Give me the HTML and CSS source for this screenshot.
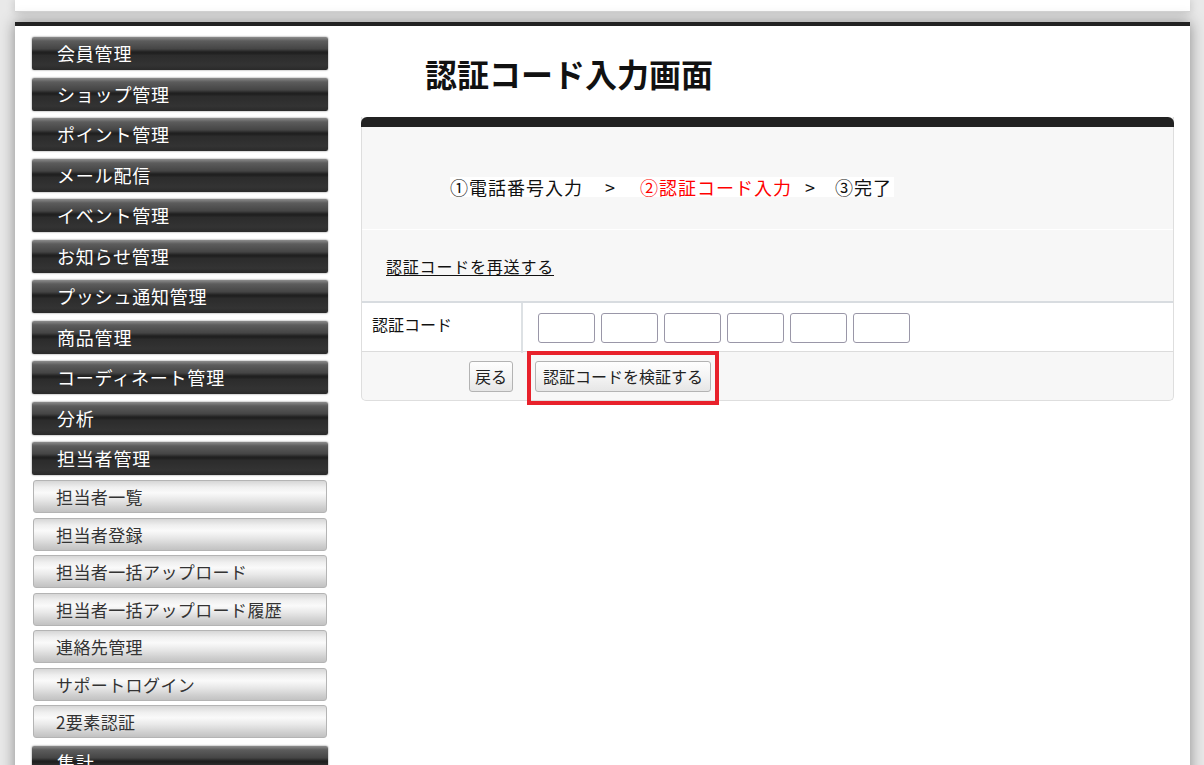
FILE: index.html
```html
<!DOCTYPE html>
<html lang="ja">
<head>
<meta charset="utf-8">
<title>認証コード入力画面</title>
<link rel="stylesheet" href="styles.css">
</head>
<body>
<div class="page">
  <div class="topbar"></div>
  <div class="frame">
    <nav class="sidebar">
      <ul class="menu">
        <li><a class="main" href="#">会員管理</a></li>
        <li><a class="main" href="#">ショップ管理</a></li>
        <li><a class="main" href="#">ポイント管理</a></li>
        <li><a class="main" href="#">メール配信</a></li>
        <li><a class="main" href="#">イベント管理</a></li>
        <li><a class="main" href="#">お知らせ管理</a></li>
        <li><a class="main" href="#">プッシュ通知管理</a></li>
        <li><a class="main" href="#">商品管理</a></li>
        <li><a class="main" href="#">コーディネート管理</a></li>
        <li><a class="main" href="#">分析</a></li>
        <li class="open"><a class="main" href="#">担当者管理</a>
          <ul class="sub">
            <li><a href="#">担当者一覧</a></li>
            <li><a href="#">担当者登録</a></li>
            <li><a href="#">担当者一括アップロード</a></li>
            <li><a href="#">担当者一括アップロード履歴</a></li>
            <li><a href="#">連絡先管理</a></li>
            <li><a href="#">サポートログイン</a></li>
            <li><a href="#">2要素認証</a></li>
          </ul>
        </li>
        <li><a class="main" href="#">集計</a></li>
      </ul>
    </nav>
    <main class="content">
      <h1 class="title">認証コード入力画面</h1>
      <section class="panel">
        <div class="panel-head"></div>
        <div class="steps"><span class="steps-inner"><span>①電話番号入力</span><span class="sep sep1">&gt;</span><span class="current">②認証コード入力</span><span class="sep sep2">&gt;</span><span>③完了</span></span></div>
        <div class="resend"><a href="#">認証コードを再送する</a></div>
        <div class="form-row">
          <div class="label">認証コード</div>
          <div class="value">
            <input class="code" type="text" maxlength="1">
            <input class="code" type="text" maxlength="1">
            <input class="code" type="text" maxlength="1">
            <input class="code" type="text" maxlength="1">
            <input class="code" type="text" maxlength="1">
            <input class="code" type="text" maxlength="1">
          </div>
        </div>
        <div class="actions">
          <div class="back-cell"><button class="btn btn-back" type="button">戻る</button></div>
          <div class="submit-cell"><button class="btn btn-submit" type="button">認証コードを検証する</button><span class="highlight"></span></div>
        </div>
      </section>
    </main>
  </div>
</div>
</body>
</html>
```

FILE: styles.css
```css
html, body {
  margin: 0;
  padding: 0;
}
body {
  background: #e9e9e9;
  font-family: "Noto Sans CJK JP", "Noto Sans", sans-serif;
  color: #111;
  overflow: hidden;
  height: 765px;
}
.page {
  width: 1175px;
  margin-left: 15px;
}
.topbar {
  height: 11px;
  background: #fff;
  border-bottom: 1px solid #d6d6d6;
  box-shadow: 0 0 10px rgba(0, 0, 0, 0.2);
  margin-bottom: 10px;
}
.frame {
  display: flex;
  background: #fff;
  border-top: 4px solid #222;
  box-shadow: 0 0 14px rgba(0, 0, 0, 0.42);
  min-height: 900px;
}
.sidebar {
  width: 296px;
  flex-shrink: 0;
  padding: 11px 0 0 17px;
}
.menu, .sub {
  list-style: none;
  margin: 0;
  padding: 0;
}
.menu > li {
  margin-bottom: 7.5px;
}
.main {
  display: block;
  height: 33px;
  line-height: 33px;
  padding-left: 25px;
  color: #fff;
  text-decoration: none;
  font-size: 18px;
  letter-spacing: 0.8px;
  border-radius: 2px;
  background: linear-gradient(to bottom, #8c8c8c 0%, #5c5c5c 12%, #454545 36%, #262626 44%, #1e1e1e 48%, #2c2c2c 56%, #333 85%, #2a2a2a 100%);
  box-shadow: 0 0 2px rgba(0, 0, 0, 0.55);
}
.open .main {
  margin-bottom: 5px;
}
.sub li {
  margin-bottom: 4.5px;
}
.sub li:last-child {
  margin-bottom: 0;
}
.sub a {
  display: block;
  height: 31px;
  line-height: 31px;
  margin: 0 1px 0 1px;
  padding-left: 22px;
  color: #333;
  text-decoration: none;
  font-size: 17px;
  letter-spacing: 0.4px;
  border: 1px solid #b4b4b4;
  border-radius: 3px;
  background: linear-gradient(to bottom, #d6d6d6 0%, #efefef 20%, #fafafa 38%, #e8e8e8 60%, #cfcfcf 85%, #c2c2c2 100%);
}
.content {
  flex: 1;
  padding: 0 16px 0 33px;
}
.title {
  margin: 27px 0 24px 64px;
  font-size: 32px;
  line-height: 40px;
  font-weight: 700;
  color: #111;
}
.panel {
  background: #f7f7f7;
  border: 1px solid #dedede;
  border-top: 0;
  border-radius: 0 0 5px 5px;
}
.panel-head {
  height: 10px;
  background: #222;
  margin: 0 -1px;
  border-radius: 6px 6px 0 0;
}
.steps {
  height: 20px;
  padding: 49px 0 33px 88px;
  border-bottom: 1px solid #fff;
}
.steps-inner {
  display: inline-flex;
  height: 20px;
  line-height: 20px;
  font-size: 18px;
  letter-spacing: 1px;
  background: #fff;
  padding-right: 2px;
  color: #111;
}
.current {
  color: #ff0000;
}
.sep1 {
  margin: 0 24px 0 22px;
}
.sep2 {
  margin: 0 19px 0 13px;
}
.resend {
  padding: 26px 0 25px 24px;
  line-height: 20px;
  font-size: 16px;
  letter-spacing: 0.8px;
}
.resend a {
  color: #111;
  text-decoration: underline;
  text-underline-offset: 2px;
}
.form-row {
  display: grid;
  grid-template-columns: 161px 1fr;
  height: 48px;
  background: #fff;
  border-top: 2px solid #d8dce0;
  border-bottom: 1px solid #dcdcdc;
}
.label {
  border-right: 2px solid #dde1e4;
  padding: 11px 10px;
  font-size: 16px;
  line-height: 20px;
}
.value {
  display: flex;
  gap: 6px;
  padding: 10px 15px;
}
.code {
  box-sizing: border-box;
  width: 57px;
  height: 30px;
  margin: 0;
  border: 1px solid #9a97a8;
  border-radius: 3px;
  background: #fff;
}
.actions {
  display: grid;
  grid-template-columns: 159px 1fr;
  height: 48px;
}
.back-cell {
  text-align: right;
  padding: 9px 8px 0 0;
}
.submit-cell {
  position: relative;
  padding: 9px 0 0 14px;
}
.btn {
  box-sizing: border-box;
  height: 31px;
  margin: 0;
  font-family: "Noto Sans CJK JP", "Noto Sans", sans-serif;
  font-size: 16px;
  line-height: 29px;
  color: #222;
  border: 1px solid #b3b3b3;
  border-radius: 3px;
  background: linear-gradient(to bottom, #fefefe 0%, #f4f4f4 50%, #e6e6e6 100%);
  cursor: pointer;
}
.btn-back {
  padding: 0 5px;
}
.btn-submit {
  padding: 0 7px;
}
.highlight {
  position: absolute;
  left: 6px;
  top: -1px;
  width: 192px;
  height: 54px;
  box-sizing: border-box;
  border: 4px solid #e8212b;
  pointer-events: none;
}
```
